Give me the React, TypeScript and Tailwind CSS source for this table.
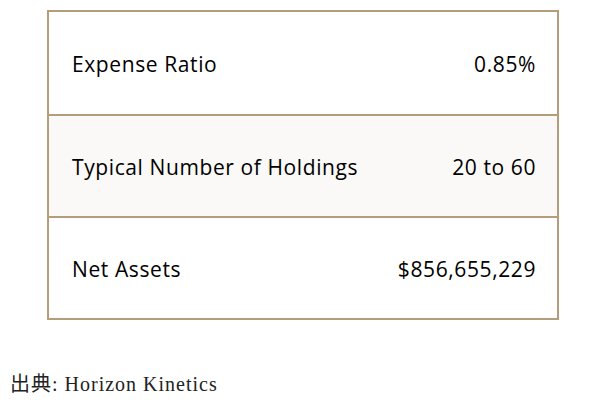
const rows = [
  { label: "Expense Ratio", value: "0.85%", shade: false },
  { label: "Typical Number of Holdings", value: "20 to 60", shade: true },
  { label: "Net Assets", value: "$856,655,229", shade: false },
];

export default function App() {
  return (
    <div className="h-[406px] w-[596px] bg-white pt-[10px]">
      <div className="ml-[47px] w-[512px] border-2 border-[#b49d7b] font-['Open_Sans',sans-serif] text-[21px] tracking-[0.6px] text-black">
        {rows.map((r, i) => (
          <div
            key={r.label}
            className={`flex h-[102px] items-center justify-between pl-[23px] pr-[21px] pt-1 ${
              i > 0 ? "border-t-2 border-[#b49d7b]" : ""
            } ${r.shade ? "bg-[#faf9f7]" : "bg-white"}`}
          >
            <span>{r.label}</span>
            <span>{r.value}</span>
          </div>
        ))}
      </div>
      <p className="mt-[49px] pl-[10px] font-['Liberation_Serif','Noto_Sans_CJK_JP',serif] text-[20px] tracking-[1px] text-[#222]">
        出典: Horizon Kinetics
      </p>
    </div>
  );
}
